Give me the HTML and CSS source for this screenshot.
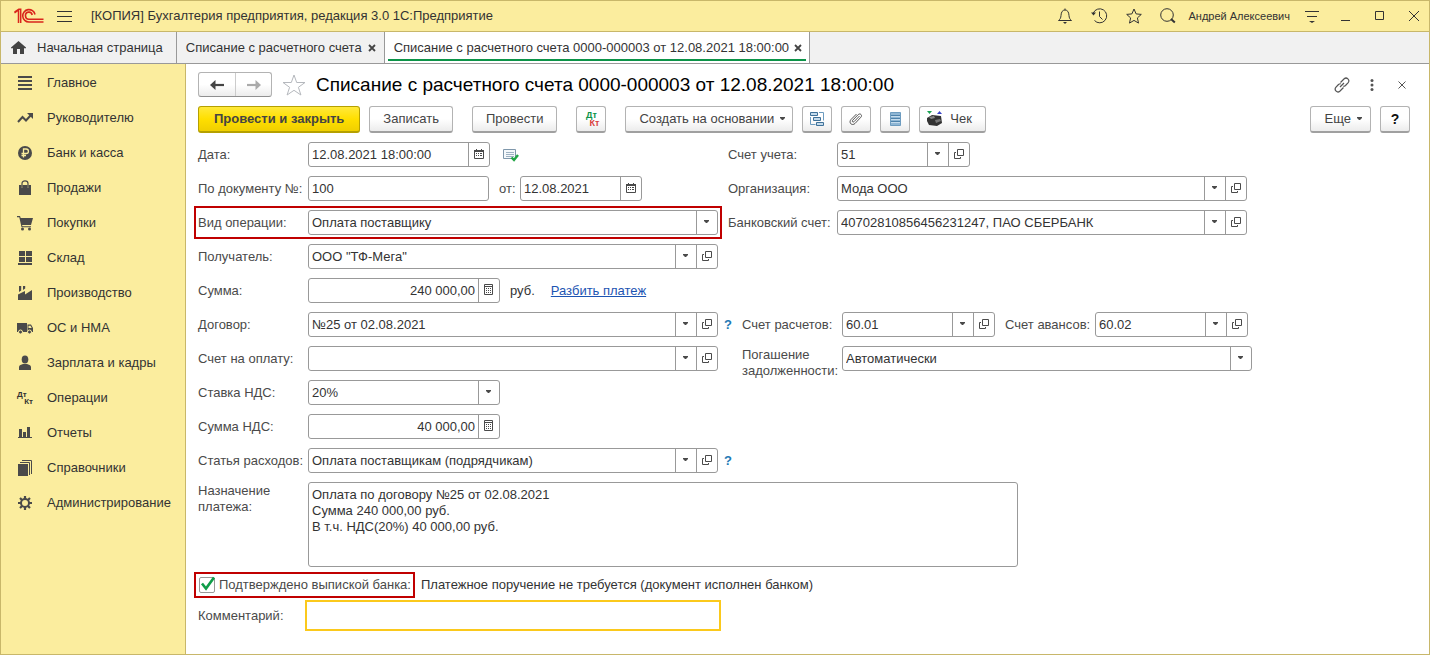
FILE: index.html
```html
<!DOCTYPE html>
<html lang="ru">
<head>
<meta charset="utf-8">
<title>Списание с расчетного счета</title>
<link rel="stylesheet" href="styles.css">
</head>
<body>
<svg class="sprite" aria-hidden="true">
  <symbol id="i-arrow" viewBox="0 0 7 4"><path d="M1 0h5v1L4 3H3L1 1z" fill="#4a4a4a"/></symbol>
  <symbol id="i-open" viewBox="0 0 10 10"><path d="M3.5 0.5h6v6h-6zM2 3.5H0.5v6h6V8" fill="none" stroke="#4a4a4a"/></symbol>
  <symbol id="i-cal" viewBox="0 0 10 10"><path d="M0.5 1.5h9v8h-9z" fill="#fff" stroke="#4a4a4a"/><path d="M0 1h10v2H0zM2 0h1v1H2zM7 0h1v1H7zM2 4h1v1H2zM4 4h1v1H4zM6 4h2v1H6zM2 6h1v1H2zM4 6h1v1H4zM6 6h2v1H6z" fill="#4a4a4a"/></symbol>
  <symbol id="i-calc" viewBox="0 0 9 11"><path d="M0.5 0.5h8v10h-8zM0.5 2.5h8" fill="none" stroke="#4a4a4a"/><path d="M2 4h1v1H2zM4 4h1v1H4zM6 4h1v1H6zM2 6h1v1H2zM4 6h1v1H4zM6 6h1v1H6zM2 8h1v1H2zM4 8h1v1H4zM6 8h1v1H6z" fill="#4a4a4a"/></symbol>
</svg>
<div class="window">
  <header class="titlebar">
    <svg class="logo" width="30" height="16" viewBox="0 0 30 16" fill="none" stroke="#d9261c"><path d="M0.500 5L4.500 2V15M6.700 15V1.200H4.800L0.500 4.200M2.500 5V5" stroke-width="1.500"/><path d="M21 6.500A6.200 6.200 0 1 0 15 14H29.500" stroke-width="1.600"/><path d="M18.200 7A3.400 3.600 0 1 0 15 11.300H29.500" stroke-width="1.600"/></svg>
    <button class="plain" aria-label="Меню"><svg width="15" height="13" viewBox="0 0 15 13"><path d="M0 1.500h15M0 6.500h15M0 11.500h15" stroke="#333"/></svg></button>
    <span class="app-name">[КОПИЯ] Бухгалтерия предприятия, редакция 3.0 1С:Предприятие</span>
    <div class="title-tools">
      <button class="plain" aria-label="Уведомления"><svg width="16" height="16" viewBox="0 0 16 16"><path d="M1.500 12.500h13c-1.800-1.400-2.300-2.600-2.500-5C11.800 4 10.500 2 8 2S4.200 4 4 7.500c-.2 2.400-.7 3.600-2.500 5zM8 2V.500" fill="none" stroke="#333"/><path d="M6 14h4l-2 2z" fill="#333"/></svg></button>
      <button class="plain" aria-label="История"><svg width="17" height="16" viewBox="0 0 17 16"><path d="M2.300 5A7 7 0 1 1 3.500 12.500M8.500 3.500v5l3 3" fill="none" stroke="#333"/><path d="M0 4.500l2.500 3L5 4.500z" fill="#333"/></svg></button>
      <button class="plain" aria-label="Избранное"><svg width="16" height="16" viewBox="0 0 16 16"><path d="M8 1l2.100 4.900 5.200.5-3.900 3.500 1.100 5.200L8 12.400l-4.500 2.700 1.100-5.200L.7 6.400l5.200-.5z" fill="none" stroke="#333"/></svg></button>
      <button class="plain" aria-label="Поиск"><svg width="16" height="16" viewBox="0 0 16 16"><circle cx="7" cy="7" r="6.300" fill="none" stroke="#333"/><path d="M11 11l3.800 3.500" stroke="#333" stroke-width="2"/></svg></button>
      <span class="user">Андрей Алексеевич</span>
      <button class="plain" aria-label="Настройки"><svg width="14" height="13" viewBox="0 0 14 13"><path d="M0 1.500h14M2 6.500h10" stroke="#333"/><path d="M4 11h6l-3 2z" fill="#333"/></svg></button>
      <div class="win-buttons">
        <button class="plain" aria-label="Свернуть"><svg width="10" height="10" viewBox="0 0 10 10"><path d="M0 9.500h9" stroke="#333"/></svg></button>
        <button class="plain" aria-label="Развернуть"><svg width="10" height="10" viewBox="0 0 10 10"><path d="M.5.500h8v8h-8z" fill="none" stroke="#333"/></svg></button>
        <button class="plain" aria-label="Закрыть"><svg width="10" height="10" viewBox="0 0 10 10"><path d="M0 0l10 10M10 0L0 10" stroke="#333"/></svg></button>
      </div>
    </div>
  </header>
  <nav class="tabs">
    <a class="tab home" href="#"><svg width="15" height="13" viewBox="0 0 15 13"><path d="M7.500 0L15 6.500v.8h-2V13H9V8H6v5H2V7.300H0v-.8z" fill="#444"/></svg>Начальная страница</a>
    <div class="tab"><a href="#">Списание с расчетного счета</a><button class="plain" aria-label="Закрыть вкладку"><svg width="8" height="8" viewBox="0 0 8 8"><path d="M1 1l6 6M7 1L1 7" stroke="#444" stroke-width="1.800"/></svg></button></div>
    <div class="tab active"><a href="#">Списание с расчетного счета 0000-000003 от 12.08.2021 18:00:00</a><button class="plain" aria-label="Закрыть вкладку"><svg width="8" height="8" viewBox="0 0 8 8"><path d="M1 1l6 6M7 1L1 7" stroke="#444" stroke-width="1.800"/></svg></button></div>
  </nav>
  <div class="body">
    <nav class="sidebar">
      <a href="#"><svg width="16" height="16" viewBox="0 0 16 16"><path d="M1 1h14v2H1zM1 5h14v2H1zM1 9h14v2H1zM1 13h14v2H1z" fill="#4a4a4a"/></svg>Главное</a>
      <a href="#"><svg width="16" height="16" viewBox="0 0 16 16"><path d="M1 12l4.500-5 3.500 3.500L14 5" fill="none" stroke="#4a4a4a" stroke-width="2"/><path d="M10 3h6v6z" fill="#4a4a4a"/></svg>Руководителю</a>
      <a href="#"><svg width="16" height="16" viewBox="0 0 16 16"><circle cx="8" cy="8" r="7" fill="#4a4a4a"/><path d="M6.500 12.500V4h2.700a2.200 2.200 0 0 1 0 4.500H4.500M4.500 10.500H9" fill="none" stroke="#fbed9e" stroke-width="1.300"/></svg>Банк и касса</a>
      <a href="#"><svg width="16" height="16" viewBox="0 0 16 16"><path d="M2 5h2.500v2.500h1V5h5v2.500h1V5H14v10H2z" fill="#4a4a4a"/><path d="M5 7V3.500C5 0 11 0 11 3.500V7" fill="none" stroke="#4a4a4a" stroke-width="1.200"/></svg>Продажи</a>
      <a href="#"><svg width="16" height="16" viewBox="0 0 16 16"><path d="M0 1h3l.7 2H16l-2 7H5l.5 1.200H14v1H4.500L2.300 2.200H0z" fill="#4a4a4a"/><circle cx="5.500" cy="14" r="1.500" fill="#4a4a4a"/><circle cx="12.500" cy="14" r="1.500" fill="#4a4a4a"/></svg>Покупки</a>
      <a href="#"><svg width="16" height="16" viewBox="0 0 16 16"><path d="M2 1h6v5H2zM9 1h6v5H9zM2 7h6v5H2zM9 7h6v5H9zM1 13h14v2H1z" fill="#4a4a4a"/></svg>Склад</a>
      <a href="#"><svg width="16" height="16" viewBox="0 0 16 16"><path d="M1 15V9.500L8 6v3.500L15 5v10zM2 1h2.200v4.500L2 7zM6 1h2.200v2.500L6 5z" fill="#4a4a4a"/></svg>Производство</a>
      <a href="#"><svg width="16" height="16" viewBox="0 0 16 16"><path d="M0 3h10v9H0zM10.500 4.500H14l2 3.500v4h-5.500z" fill="#4a4a4a"/><path d="M11.500 5.700h2L14.700 8h-3.200z" fill="#fbed9e"/><g fill="#4a4a4a" stroke="#fbed9e"><circle cx="3.500" cy="12" r="2"/><circle cx="12.500" cy="12" r="2"/></g></svg>ОС и НМА</a>
      <a href="#"><svg width="16" height="16" viewBox="0 0 16 16"><ellipse cx="8" cy="4.500" rx="3.300" ry="4" fill="#4a4a4a"/><path d="M2 15v-3c0-2 2.500-2.500 4-3h4c1.500.5 4 1 4 3v3z" fill="#4a4a4a"/></svg>Зарплата и кадры</a>
      <a href="#"><span class="dtkt"><span>Дт</span><span>Кт</span></span>Операции</a>
      <a href="#"><svg width="16" height="16" viewBox="0 0 16 16"><path d="M2 4h3v9H2zM6 7h3v6H6zM10 2h3v11h-3zM1 12h14v1H1z" fill="#4a4a4a"/></svg>Отчеты</a>
      <a href="#"><svg width="16" height="16" viewBox="0 0 16 16"><path d="M1 4h10v12H1z" fill="#4a4a4a"/><path d="M3 2.500h9.500V15M5 .5h9.500V14" fill="none" stroke="#4a4a4a"/></svg>Справочники</a>
      <a href="#"><svg width="16" height="16" viewBox="0 0 16 16"><g stroke="#4a4a4a" stroke-width="2.200"><path d="M8 1v14M1 8h14M3 3l10 10M13 3L3 13"/></g><circle cx="8" cy="8" r="4" fill="#fbed9e" stroke="#4a4a4a" stroke-width="2"/></svg>Администрирование</a>
    </nav>
    <main class="doc">
      <div class="heading">
        <div class="history">
          <button aria-label="Назад"><svg width="14" height="10" viewBox="0 0 14 10"><path d="M5.500 0v10L0 5z" fill="#444"/><path d="M4 5h10" stroke="#444" stroke-width="2.200"/></svg></button>
          <button aria-label="Вперед"><svg width="14" height="10" viewBox="0 0 14 10"><path d="M8.500 0v10L14 5z" fill="#aaa"/><path d="M0 5h10" stroke="#aaa" stroke-width="2.200"/></svg></button>
        </div>
        <button class="plain star" aria-label="В избранное"><svg width="24" height="22" viewBox="0 0 24 22"><path d="M12 1l2.700 7.500h8.300l-6.600 4.800 2.500 7.700L12 16.300 5.100 21l2.500-7.700L1 8.500h8.300z" fill="none" stroke="#b5b8bd"/></svg></button>
        <h1>Списание с расчетного счета 0000-000003 от 12.08.2021 18:00:00</h1>
        <div class="heading-tools">
          <button class="plain" aria-label="Ссылка"><svg width="16" height="16" viewBox="0 0 16 16" fill="none" stroke="#555" stroke-width="1.200"><path d="M6.500 5.500l3.700-3.700c2.500-2.200 6 1.200 4 3.800L11.500 8.500c-.8.700-1.500.9-2.300.7M9.500 10.500l-3.700 3.700c-2.500 2.200-6-1.200-4-3.800L4.500 7.500c.8-.7 1.500-.9 2.300-.7M6 10l4-4"/></svg></button>
          <button class="plain" aria-label="Действия"><svg width="4" height="12" viewBox="0 0 4 12" fill="#555"><circle cx="2" cy="1.600" r="1.500"/><circle cx="2" cy="6" r="1.500"/><circle cx="2" cy="10.400" r="1.500"/></svg></button>
          <button class="plain close" aria-label="Закрыть"><svg width="8" height="8" viewBox="0 0 8 8"><path d="M.5.500l7 7M7.500.500l-7 7" stroke="#555"/></svg></button>
        </div>
      </div>
      <div class="toolbar">
        <button class="btn primary">Провести и закрыть</button>
        <button class="btn">Записать</button>
        <button class="btn spaced">Провести</button>
        <button class="btn icon spaced" aria-label="Дт Кт"><span class="dtkt color"><span>Дт</span><span>Кт</span></span></button>
        <button class="btn spaced menu">Создать на основании<svg width="7" height="4"><use href="#i-arrow"/></svg></button>
        <button class="btn icon" aria-label="Структура"><svg width="16" height="16" viewBox="0 0 16 16" fill="#c4dbec" stroke="#3f7199"><path d="M1.500 1.500h7v3h-7zM4.500 6.500h7v3h-7zM7.500 11.500h7v3h-7z"/><path d="M10 1.500h4.500v8M1.500 6v7.500h5" fill="none" stroke="#6d9cc0"/></svg></button>
        <button class="btn icon" aria-label="Файлы"><svg width="14" height="14" viewBox="0 0 14 14" fill="none" stroke="#555"><path d="M10.500 4L5 9.700c-1 1-2.400-.4-1.400-1.400L9.200 2.600c2-1.800 4.500.6 2.700 2.600L6 11.500c-3 2.800-6.800-.8-4-4L7.500 2"/></svg></button>
        <button class="btn icon" aria-label="Список"><svg width="11" height="14" viewBox="0 0 11 14"><path d="M.5.500h10v13H.500z" fill="#8fb6d4" stroke="#6d9cc0"/><path d="M1 3.500h9M1 6.500h9M1 9.500h9" stroke="#4d82ab"/><path d="M1 4.500h9M1 7.500h9M1 10.500h9" stroke="#c4dbec"/></svg></button>
        <button class="btn check"><svg width="18" height="16" viewBox="0 0 18 16"><path d="M1 7l5-3 9 1 1 7-5 3-8-1-2-4z" fill="#333"/><path d="M3 6l5-1 1 2-4 1z" fill="#888"/><path d="M9 9l5-1 1 2-5 2z" fill="#777"/><path d="M1 0h5L3.500 3z" fill="#1aa355"/><path d="M11 3h5l-2.500-3z" fill="#3a45c8"/></svg>Чек</button>
        <button class="btn menu more">Еще<svg width="7" height="4"><use href="#i-arrow"/></svg></button>
        <button class="btn icon help">?</button>
      </div>
      <form class="form">
        <div class="left">
          <label for="date">Дата:</label>
          <div class="cell"><div class="field w-date"><input id="date" value="12.08.2021 18:00:00"><button type="button" aria-label="Календарь"><svg width="10" height="10"><use href="#i-cal"/></svg></button></div>
          <svg class="posted" width="16" height="14" viewBox="0 0 16 14"><path d="M.5 1.500h12v9H.500z" fill="#f4f8fb" stroke="#7f97ab"/><path d="M3 4.500h8M3 6.500h8M3 8.500h8" stroke="#9db1c2"/><path d="M8.500 9.500l2.500 2.500 4-5" fill="none" stroke="#21a545" stroke-width="2.400"/></svg></div>
        </div>
        <div class="right">
          <label for="acc">Счет учета:</label>
          <div class="field w-acc"><select id="acc"><option>51</option></select><span class="drop"><svg width="7" height="4"><use href="#i-arrow"/></svg></span><button type="button" aria-label="Открыть"><svg width="10" height="10"><use href="#i-open"/></svg></button></div>
        </div>

        <div class="left">
          <label for="docnum">По документу №:</label>
          <div class="cell"><div class="field w-num"><input id="docnum" value="100"></div>
          <label class="from" for="docdate">от:</label>
          <div class="field w-from"><input id="docdate" value="12.08.2021"><button type="button" aria-label="Календарь"><svg width="10" height="10"><use href="#i-cal"/></svg></button></div></div>
        </div>
        <div class="right">
          <label for="org">Организация:</label>
          <div class="field w-wide"><select id="org"><option>Мода ООО</option></select><span class="drop"><svg width="7" height="4"><use href="#i-arrow"/></svg></span><button type="button" aria-label="Открыть"><svg width="10" height="10"><use href="#i-open"/></svg></button></div>
        </div>

        <div class="left marked">
          <label for="kind">Вид операции:</label>
          <div class="field"><select id="kind"><option>Оплата поставщику</option></select><span class="drop"><svg width="7" height="4"><use href="#i-arrow"/></svg></span></div>
        </div>
        <div class="right">
          <label for="bank">Банковский счет:</label>
          <div class="field w-wide"><select id="bank"><option>40702810856456231247, ПАО СБЕРБАНК</option></select><span class="drop"><svg width="7" height="4"><use href="#i-arrow"/></svg></span><button type="button" aria-label="Открыть"><svg width="10" height="10"><use href="#i-open"/></svg></button></div>
        </div>

        <div class="left">
          <label for="payee">Получатель:</label>
          <div class="field"><select id="payee"><option>ООО "ТФ-Мега"</option></select><span class="drop"><svg width="7" height="4"><use href="#i-arrow"/></svg></span><button type="button" aria-label="Открыть"><svg width="10" height="10"><use href="#i-open"/></svg></button></div>
        </div>

        <div class="left">
          <label for="sum">Сумма:</label>
          <div class="cell"><div class="field w-sum"><input class="num" id="sum" value="240 000,00"><button type="button" aria-label="Калькулятор"><svg width="9" height="11"><use href="#i-calc"/></svg></button></div>
          <span class="unit">руб.</span><a class="link" href="#">Разбить платеж</a></div>
        </div>

        <div class="left">
          <label for="contract">Договор:</label>
          <div class="field"><select id="contract"><option>№25 от 02.08.2021</option></select><span class="drop"><svg width="7" height="4"><use href="#i-arrow"/></svg></span><button type="button" aria-label="Открыть"><svg width="10" height="10"><use href="#i-open"/></svg></button></div>
        </div>
        <div class="right settle">
          <button type="button" class="plain hint">?</button>
          <label for="acc1">Счет расчетов:</label>
          <div class="field w-acc2"><select id="acc1"><option>60.01</option></select><span class="drop"><svg width="7" height="4"><use href="#i-arrow"/></svg></span><button type="button" aria-label="Открыть"><svg width="10" height="10"><use href="#i-open"/></svg></button></div>
          <label class="advance" for="acc2">Счет авансов:</label>
          <div class="field w-acc2"><select id="acc2"><option>60.02</option></select><span class="drop"><svg width="7" height="4"><use href="#i-arrow"/></svg></span><button type="button" aria-label="Открыть"><svg width="10" height="10"><use href="#i-open"/></svg></button></div>
        </div>

        <div class="left">
          <label for="invoice">Счет на оплату:</label>
          <div class="field"><select id="invoice"><option></option></select><span class="drop"><svg width="7" height="4"><use href="#i-arrow"/></svg></span><button type="button" aria-label="Открыть"><svg width="10" height="10"><use href="#i-open"/></svg></button></div>
        </div>
        <div class="right settle">
          <span class="hint"></span>
          <label class="two-line" for="debt">Погашение задолженности:</label>
          <div class="field w-wide"><select id="debt"><option>Автоматически</option></select><span class="drop"><svg width="7" height="4"><use href="#i-arrow"/></svg></span></div>
        </div>

        <div class="left">
          <label for="rate">Ставка НДС:</label>
          <div class="cell"><div class="field w-sum"><select id="rate"><option>20%</option></select><span class="drop"><svg width="7" height="4"><use href="#i-arrow"/></svg></span></div></div>
        </div>

        <div class="left">
          <label for="vat">Сумма НДС:</label>
          <div class="cell"><div class="field w-sum"><input class="num" id="vat" value="40 000,00"><button type="button" aria-label="Калькулятор"><svg width="9" height="11"><use href="#i-calc"/></svg></button></div></div>
        </div>

        <div class="left">
          <label for="article">Статья расходов:</label>
          <div class="field"><select id="article"><option>Оплата поставщикам (подрядчикам)</option></select><span class="drop"><svg width="7" height="4"><use href="#i-arrow"/></svg></span><button type="button" aria-label="Открыть"><svg width="10" height="10"><use href="#i-open"/></svg></button></div>
        </div>
        <div class="right settle"><button type="button" class="plain hint">?</button></div>

        <div class="purpose">
          <label class="two-line" for="purpose">Назначение платежа:</label>
          <textarea id="purpose">Оплата по договору №25 от 02.08.2021
Сумма 240 000,00 руб.
В т.ч. НДС(20%) 40 000,00 руб.</textarea>
        </div>
      </form>
      <div class="confirm">
        <label class="marked"><span class="tick"><input type="checkbox" checked><svg width="16" height="15" viewBox="0 0 16 15"><path d="M2 7.500l4 5L14 1.500" fill="none" stroke="#0f9d49" stroke-width="2.600"/></svg></span>Подтверждено выпиской банка:</label>
        <span>Платежное поручение не требуется (документ исполнен банком)</span>
      </div>
      <div class="comment">
        <label for="comment">Комментарий:</label>
        <input id="comment">
      </div>
    </main>
  </div>
</div>
</body>
</html>
```
FILE: styles.css
```css
* { box-sizing: border-box; }
body { margin: 0; font: 13px/16px "Liberation Sans", Arial, sans-serif; color: #333; background: #fff; }
button, input, select, textarea { font: inherit; color: inherit; margin: 0; }
button { cursor: pointer; }
svg { display: block; flex: none; }
a { color: inherit; text-decoration: none; }
.sprite { position: absolute; width: 0; height: 0; }
.plain { display: flex; align-items: center; justify-content: center; border: 0; padding: 0; background: none; }

.window { display: flex; flex-direction: column; min-height: 100vh; border: 1px solid #c8b76a; }
.titlebar { display: flex; align-items: center; height: 31px; padding: 0 10px 0 13px; background: #fbed9e; border-bottom: 1px solid #c8b76a; }
.titlebar > .plain { margin: 0 19px 0 13px; }
.title-tools { display: flex; align-items: center; margin-left: auto; gap: 18px; }
.user { font-size: 11px; margin-left: -6px; margin-right: -3px; }
.win-buttons { display: flex; gap: 24px; margin-left: 4px; }

.tabs { display: flex; height: 32px; background: #f1f1f1; border-bottom: 1px solid #999; }
.tab { display: flex; align-items: center; gap: 6px; padding: 0 8px 0 9px; border-right: 1px solid #999; }
.tab.home { gap: 11px; padding: 0 13px 0 10px; }
.tab.active { position: relative; gap: 5px; padding-right: 7px; background: #fff; }
.tab.active::after { content: ""; position: absolute; left: 3px; right: 3px; bottom: 2px; height: 2px; background: #0c9348; }

.body { display: flex; flex: 1; }
.sidebar { flex: none; width: 185px; padding-top: 1px; background: #fbed9e; border-right: 1px solid #c8b76a; }
.sidebar a { display: flex; align-items: center; gap: 14px; height: 35px; padding-left: 16px; }
.dtkt { display: flex; flex-direction: column; width: 16px; font: bold 8px/7px "Liberation Sans", Arial, sans-serif; }
.dtkt span:last-child { align-self: flex-end; }
.dtkt.color { font-size: 9px; line-height: 8px; }
.dtkt.color span:first-child { color: #0c9348; }
.dtkt.color span:last-child { color: #d9403c; }

.doc { flex: 1; min-width: 0; padding: 8px 19px 20px 12px; }
.heading { display: flex; align-items: center; height: 25px; }
.history { display: flex; height: 25px; border: 1px solid #b3b3b3; border-bottom-color: #8f8f8f; border-radius: 3px; background: linear-gradient(#fff 50%, #ececec); }
.history button { display: flex; align-items: center; justify-content: center; width: 36px; padding: 0; border: 0; background: none; }
.history button + button { border-left: 1px solid #ccc; }
.star { margin: 0 10px; }
h1 { margin: 0; font-size: 19px; line-height: 24px; font-weight: normal; color: #000; }
.heading-tools { display: flex; align-items: center; gap: 20px; margin: 0 4px 0 auto; }
.heading-tools .close { margin-left: 4px; }

.toolbar { display: flex; gap: 9px; margin-top: 9px; }
.btn { display: flex; align-items: center; justify-content: center; height: 27px; padding: 0 13px; white-space: nowrap; color: #444; border: 1px solid #b3b3b3; border-bottom: 2px solid #a0a0a0; border-radius: 3px; background: linear-gradient(#fff 50%, #ececec); }
.btn.primary { padding: 0 15px; font-weight: bold; border-color: #b5a000; background: linear-gradient(#ffe93b, #ffdf00 50%, #f0cf00); }
.btn.icon { width: 30px; padding: 0; }
.btn.spaced { margin-left: 10px; }
.btn.menu { gap: 5px; padding-right: 6px; }
.btn.check { gap: 6px; padding-left: 6px; }
.btn.more { margin-left: auto; padding: 0 7px 0 14px; }
.btn.help { font-weight: bold; font-size: 14px; color: #111; }

.form { display: grid; grid-template-columns: minmax(0, 520px) minmax(0, 1fr); row-gap: 9px; margin-top: 9px; }
.left { grid-column: 1; display: flex; align-items: center; height: 25px; color: #333; }
.left > label, .purpose > label { flex: none; width: 110px; }
label { color: #4a4a4a; white-space: nowrap; }
.left > .field { flex: 1; }
.cell { display: flex; align-items: center; }
.right { grid-column: 2; display: flex; align-items: center; height: 25px; padding-left: 10px; }
.right > label { flex: none; width: 109px; }
.right.settle { padding-left: 4px; }
.hint { flex: none; width: 12px; margin-right: 8px; font-weight: bold; color: #2379b5; }
.right.settle > label { width: 100px; }
.right.settle > label.advance { width: 90px; margin-left: 10px; }
label.two-line { white-space: normal; }
.right > .two-line { height: 24px; }
.purpose > .two-line { padding-top: 1px; }

.field { display: flex; height: 25px; border: 1px solid #999; border-radius: 3px; background: #fff; }
.field input, .field select { flex: 1; min-width: 0; width: 100%; padding: 0 3px; border: 0; outline: 0; background: none; appearance: none; }
.field input.num { text-align: right; }
.field button, .drop { display: flex; flex: none; align-items: center; justify-content: center; width: 21px; padding: 0 1px 2px 0; border: 0; border-left: 1px solid #999; background: none; }
.drop { pointer-events: none; }
.w-date { width: 182px; }
.w-num { width: 181px; }
.w-from { width: 122px; }
.w-sum { width: 192px; }
.w-acc { width: 133px; }
.w-acc2 { width: 153px; }
.w-wide { width: 410px; }
.posted { margin-left: 13px; }
.from { width: 21px; margin-left: 10px; }
.unit { margin: 0 16px 0 10px; }
.link { color: #1c54b2; text-decoration: underline; }

.purpose { grid-column: 1 / -1; display: flex; align-items: flex-start; }
textarea { width: 100%; max-width: 710px; height: 85px; padding: 4px 3px; border: 1px solid #999; border-radius: 3px; outline: 0; resize: none; color: #333; }
.marked { outline: 2px solid #c00000; outline-offset: 2px; }

.confirm { display: flex; align-items: center; gap: 10px; height: 18px; margin-top: 9px; }
.confirm .marked { display: flex; align-items: center; gap: 4px; height: 18px; }
.tick { position: relative; display: block; width: 17px; height: 16px; }
.tick input { display: block; width: 16px; height: 16px; margin: 0 0 0 1px; appearance: none; border: 1px solid #999; border-radius: 2px; background: #fff; }
.tick svg { position: absolute; left: 2px; top: -1px; pointer-events: none; }

.comment { display: flex; align-items: center; margin-top: 9px; }
.comment label { width: 110px; }
.comment input { flex: 1; max-width: 410px; height: 25px; padding: 0 3px; border: 0; outline: 2px solid #fbc91c; outline-offset: 1px; }
```
